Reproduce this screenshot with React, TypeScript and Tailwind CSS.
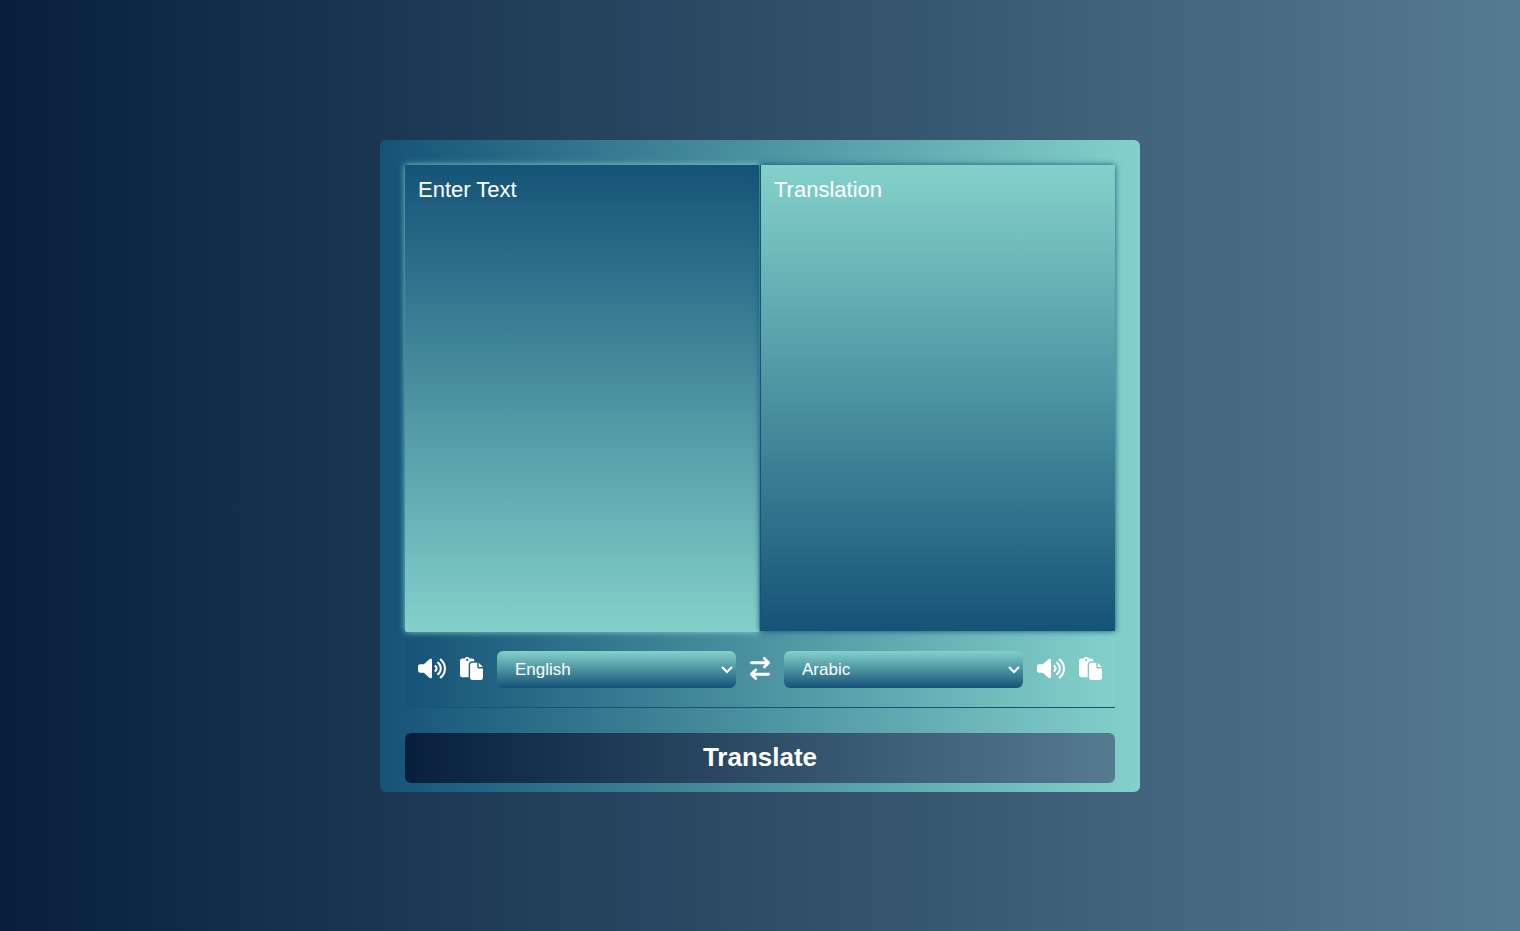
import { FaArrowRightArrowLeft } from "react-icons/fa6";

const languages = ["English", "Arabic", "French", "German", "Spanish"];

function VolumeIcon() {
  return (
    <svg viewBox="0 0 640 512" aria-hidden="true" className="h-[23px] w-7 fill-white">
      <path d="M412.6 182c-10.28-8.334-25.41-6.867-33.75 3.402c-8.406 10.24-6.906 25.35 3.375 33.74C393.5 228.4 400 241.8 400 255.1c0 14.17-6.5 27.59-17.81 36.83c-10.28 8.396-11.78 23.5-3.375 33.74c4.719 5.806 11.62 8.802 18.56 8.802c5.344 0 10.75-1.779 15.19-5.399C435.1 311.5 448 284.6 448 255.1S435.1 200.4 412.6 182zM473.1 108.2c-10.22-8.334-25.34-6.898-33.78 3.34c-8.406 10.24-6.906 25.35 3.344 33.74C476.6 172.1 496 213.3 496 255.1s-19.44 82.1-53.31 110.7c-10.25 8.396-11.75 23.5-3.344 33.74c4.75 5.775 11.62 8.771 18.56 8.771c5.375 0 10.75-1.779 15.22-5.431C518.2 366.9 544 313 544 255.1S518.2 145 473.1 108.2zM534.4 33.4c-10.22-8.334-25.34-6.867-33.78 3.34c-8.406 10.24-6.906 25.35 3.344 33.74C559.9 116.3 592 183.9 592 255.1s-32.09 139.7-88.06 185.5c-10.25 8.396-11.75 23.5-3.344 33.74C505.3 481 512.2 484 519.2 484c5.375 0 10.75-1.779 15.22-5.431C601.5 423.6 640 342.5 640 255.1S601.5 88.34 534.4 33.4zM301.2 34.98c-11.5-5.181-25.01-3.076-34.43 5.29L131.8 160.1H48c-26.51 0-48 21.48-48 47.96v95.92c0 26.48 21.49 47.96 48 47.96h83.84l134.9 119.8C272.7 477 280.3 479.8 288 479.8c4.438 0 8.959-.9314 13.16-2.835C312.7 471.8 320 460.4 320 447.9V64.12C320 51.55 312.7 40.13 301.2 34.98z" />
    </svg>
  );
}

function PasteIcon() {
  return (
    <svg viewBox="0 0 512 512" aria-hidden="true" className="size-[23px] fill-white">
      <path d="M320 96V80C320 53.49 298.5 32 272 32H215.4C204.3 12.89 183.6 0 160 0S115.7 12.89 104.6 32H48C21.49 32 0 53.49 0 80v320C0 426.5 21.49 448 48 448l144 .0013L192 176C192 131.8 227.8 96 272 96H320zM160 88C146.8 88 136 77.25 136 64S146.8 40 160 40S184 50.75 184 64S173.3 88 160 88zM416 128v96h96L416 128zM384 224L384 128h-112C245.5 128 224 149.5 224 176v288c0 26.51 21.49 48 48 48h192c26.51 0 48-21.49 48-48V256h-95.99C398.4 256 384 241.6 384 224z" />
    </svg>
  );
}

function LanguageSelect({ label, initial }: { label: string; initial: string }) {
  return (
    <div className="relative min-w-0 flex-1">
      <select
        aria-label={label}
        defaultValue={initial}
        className="block h-[37px] w-full appearance-none rounded-md bg-linear-to-b/srgb from-[#84d1cb] to-[#155377] pt-0.5 pr-5 pl-[18px] text-[17px] text-white outline-none"
      >
        {languages.map((name) => (
          <option key={name} className="text-black">{name}</option>
        ))}
      </select>
      <svg
        viewBox="0 0 12 8"
        aria-hidden="true"
        className="pointer-events-none absolute top-[15px] right-[3px] h-2 w-3 fill-none stroke-white stroke-2"
      >
        <path d="M1 1 6 6 11 1" />
      </svg>
    </div>
  );
}

function Tools({ name }: { name: string }) {
  return (
    <div className="flex items-center gap-3.5 pb-0.5">
      <button type="button" aria-label={`Listen to ${name}`}>
        <VolumeIcon />
      </button>
      <button type="button" aria-label={`Copy ${name}`}>
        <PasteIcon />
      </button>
    </div>
  );
}

export default function App() {
  return (
    <main className="flex min-h-screen items-center justify-center bg-linear-to-r/srgb from-[#071f3d] to-[#557b91] font-['Liberation_Sans',Arial,sans-serif] text-white">
      <section className="w-full max-w-[760px] rounded-md bg-linear-to-r/srgb from-[#155377] to-[#84d1cb] px-[25px] pt-[25px] pb-[9px]">
        <div className="grid h-[467px] grid-cols-2">
          <textarea
            aria-label="Enter Text"
            placeholder="Enter Text"
            className="h-[467px] resize-none rounded-bl-xs border-r border-[#5ba3ad] bg-linear-to-b/srgb from-[#155377] to-[#84d1cb] px-[13px] py-3 text-[22px] leading-[25px] shadow-[0_0_6px_#84d1cb] outline-none placeholder:text-white"
          />
          <textarea
            aria-label="Translation"
            placeholder="Translation"
            readOnly
            className="h-[466px] resize-none border-l border-[#155377] bg-linear-to-b/srgb from-[#84d1cb] to-[#155377] px-[13px] py-3 text-[22px] leading-[25px] shadow-[0_0_6px_#155377] outline-none placeholder:text-white"
          />
        </div>
        <div className="flex h-[76px] items-center gap-3.5 border-b border-[#155377] bg-linear-to-r/srgb from-[#155377] to-[#84d1cb] px-[13px]">
          <Tools name="source text" />
          <LanguageSelect label="Source language" initial="English" />
          <button type="button" aria-label="Swap languages" className="pb-0.5">
            <FaArrowRightArrowLeft className="h-[23px] w-5" />
          </button>
          <LanguageSelect label="Target language" initial="Arabic" />
          <Tools name="translation" />
        </div>
        <button
          type="button"
          className="mt-[25px] h-[50px] w-full rounded-md bg-linear-to-r/srgb from-[#071f3d] to-[#557b91] text-[26px] font-bold"
        >
          Translate
        </button>
      </section>
    </main>
  );
}
